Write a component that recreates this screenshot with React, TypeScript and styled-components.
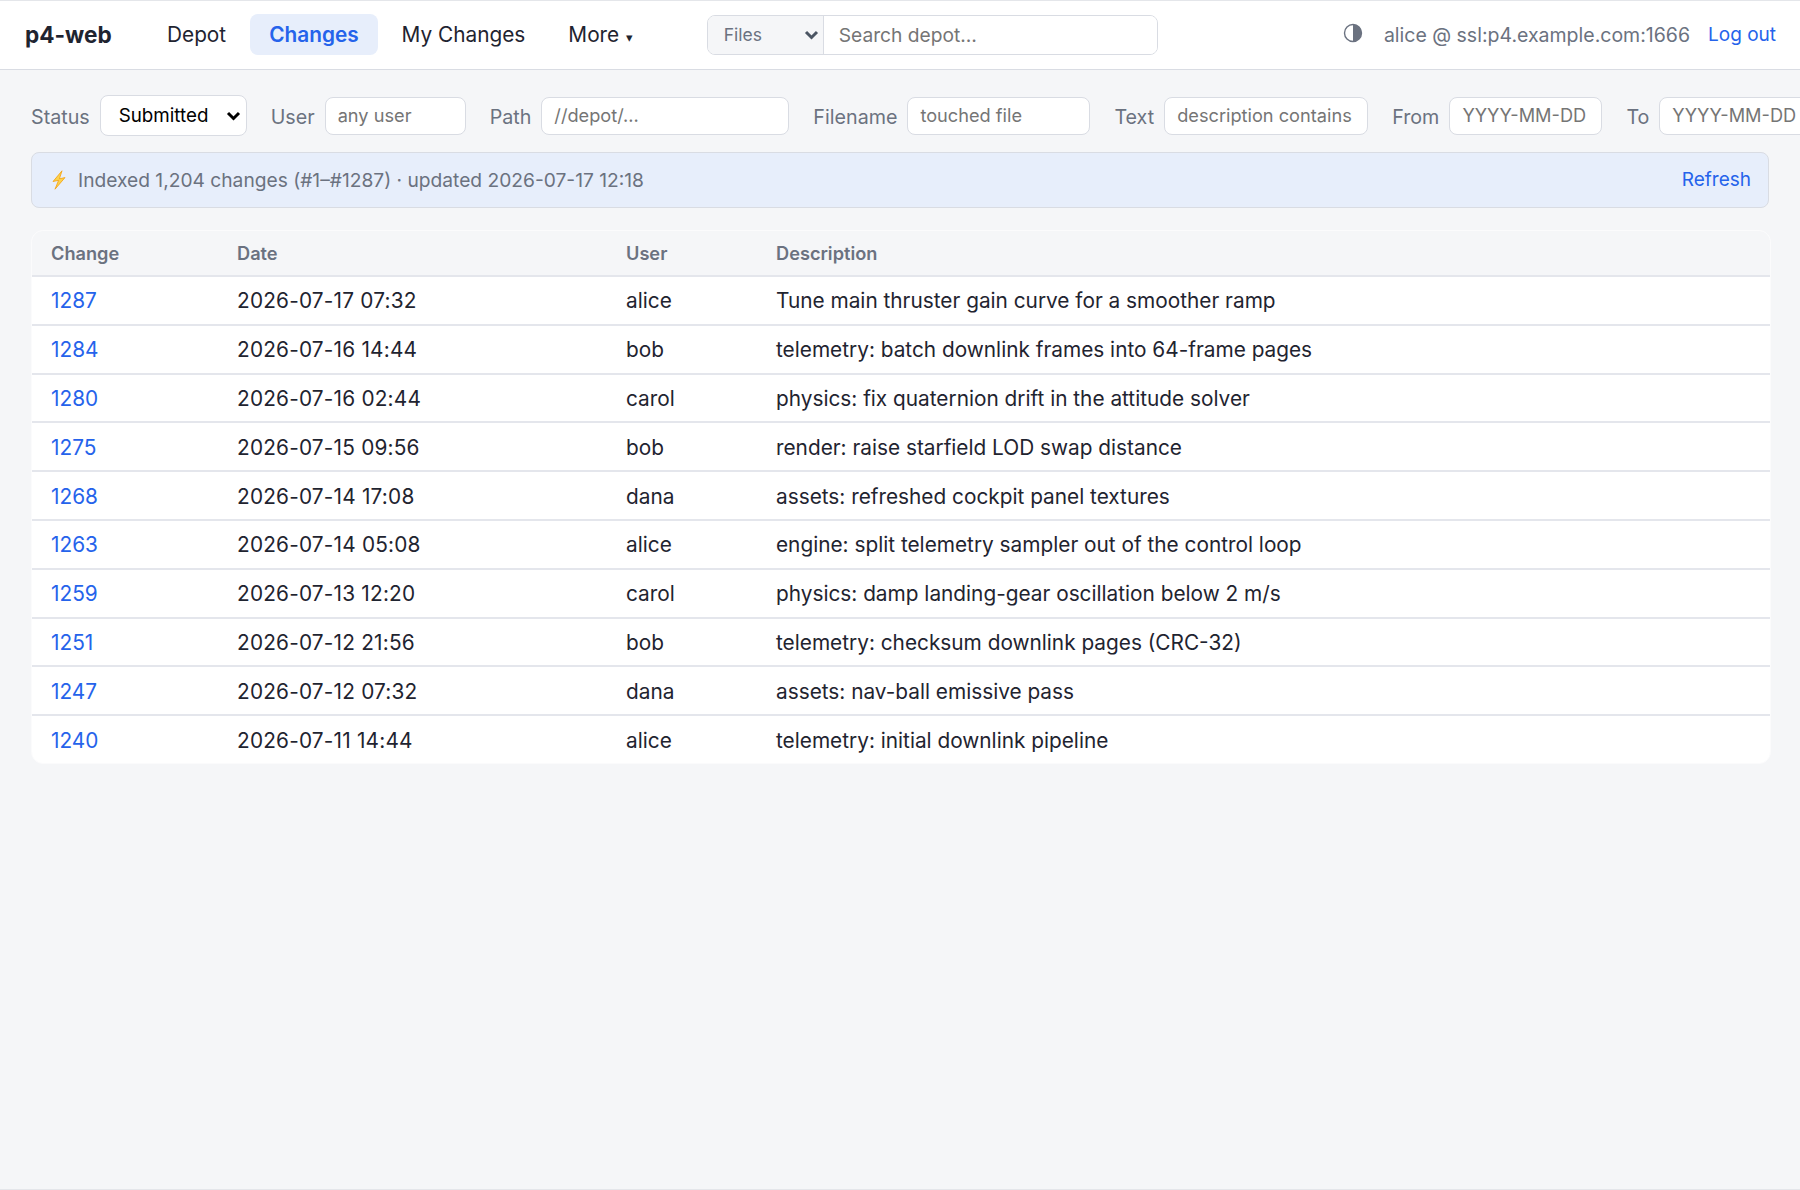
import React from 'react'
import styled, { createGlobalStyle } from 'styled-components'

const GlobalStyle = createGlobalStyle`
  html, body {
    margin: 0;
    height: 100%;
    overflow: hidden;
    background: #f5f6f8;
  }
  body {
    font-family: Inter, "Liberation Sans", sans-serif;
    color: #1f2430;
  }
  input::placeholder {
    color: #757575;
    opacity: 1;
  }
`

const Page = styled.div`
  width: 1800px;
  height: 1190px;
  overflow: hidden;
  border-top: 1px solid #e4e6ea;
  border-bottom: 1px solid #e4e6ea;
  box-sizing: border-box;
`

const TopBar = styled.header`
  display: flex;
  align-items: center;
  height: 69px;
  box-sizing: border-box;
  padding: 0 24px 1px 25px;
  background: #fff;
  border-bottom: 1px solid #d9dce3;
`

const Brand = styled.div`
  font-size: 22.6px;
  font-weight: 700;
  width: 123px;
  flex: none;
`

const Nav = styled.nav`
  display: flex;
  align-items: center;
  gap: 5px;
`

const NavItem = styled.a<{ $active?: boolean }>`
  display: block;
  padding: 8px 19px;
  height: 41px;
  box-sizing: border-box;
  line-height: 25px;
  border-radius: 8px;
  font-size: 20.8px;
  font-weight: ${p => (p.$active ? 600 : 400)};
  color: ${p => (p.$active ? '#2563eb' : '#1f2430')};
  background: ${p => (p.$active ? '#e7eefb' : 'transparent')};
`

const Caret = styled.span`
  font-size: 13px;
  margin-left: 7px;
`

const SearchGroup = styled.div`
  display: flex;
  height: 40px;
  width: 451px;
  margin-left: 54.5px;
  box-sizing: border-box;
  border: 1px solid #d9dce3;
  border-radius: 8px;
  overflow: hidden;
`

const SelectWrap = styled.div`
  position: relative;
  flex: none;
`

const Chevron = styled.svg<{ $right: number; $color: string }>`
  position: absolute;
  top: 50%;
  right: ${p => p.$right}px;
  width: 15px;
  height: 10px;
  margin-top: -5px;
  color: ${p => p.$color};
  pointer-events: none;
`

const ScopeSelect = styled.select`
  display: block;
  appearance: none;
  width: 116px;
  height: 38px;
  border: none;
  border-right: 1px solid #d9dce3;
  background: #f5f6f8;
  color: #6b7280;
  font: 400 17.5px Inter, sans-serif;
  padding: 0 16px;
  outline: none;
`

const SearchInput = styled.input`
  flex: 1;
  min-width: 0;
  border: none;
  padding: 0 15px;
  font: 400 19.2px Inter, sans-serif;
  outline: none;
`

const UserArea = styled.div`
  display: flex;
  align-items: center;
  margin-left: auto;
`

const ThemeToggle = styled.svg`
  width: 20px;
  height: 20px;
  margin-right: 21px;
  margin-top: -4px;
`

const UserInfo = styled.span`
  font-size: 19.5px;
  color: #6b7280;
  margin-right: 18px;
`

const BlueLink = styled.a`
  font-size: 19px;
  color: #2563eb;
`

const RefreshLink = styled(BlueLink)`
  margin-top: -2px;
`

const Main = styled.main`
  padding: 26px 31px 0;
`

const Filters = styled.div`
  display: flex;
  align-items: center;
  gap: 24px;
  width: 1900px;
  height: 39px;
`

const Field = styled.label`
  display: flex;
  align-items: center;
  gap: 10px;
  font-size: 19.7px;
  color: #6b7280;
`

const FieldLabel = styled.span`
  padding-top: 3px;
`

const StatusSelect = styled.select`
  display: block;
  appearance: none;
  width: 147px;
  height: 41px;
  background: #fff;
  border: 1px solid #d9dce3;
  border-radius: 8px;
  color: #000;
  font: 400 18.8px Inter, sans-serif;
  padding: 0 18px;
  outline: none;
`

const FilterInput = styled.input<{ $width: number }>`
  width: ${p => p.$width}px;
  height: 38px;
  box-sizing: border-box;
  background: #fff;
  border: 1px solid #d9dce3;
  border-radius: 8px;
  font: 400 18.2px Inter, sans-serif;
  padding: 0 12px 1px;
  outline: none;
`

const Banner = styled.div`
  display: flex;
  align-items: center;
  justify-content: space-between;
  box-sizing: border-box;
  height: 56px;
  width: 1738px;
  margin-top: 17px;
  padding: 0 17px 0 18px;
  background: #e7eefb;
  border: 1px solid #d9dce3;
  border-radius: 8px;
`

const BannerText = styled.div`
  display: flex;
  align-items: center;
  gap: 11px;
  font-size: 19.2px;
  color: #6b7280;
`

const Bolt = styled.svg`
  width: 16px;
  height: 20px;
  margin-left: 1px;
`

const TableCard = styled.div`
  width: 1738px;
  margin-top: 22px;
  border: 1px solid #fbfbfc;
  border-radius: 12px;
  background: #fff;
  overflow: hidden;
`

const Table = styled.table`
  width: 100%;
  border-collapse: collapse;
  table-layout: fixed;
`

const HeadCell = styled.th<{ $width?: number }>`
  box-sizing: border-box;
  width: ${p => (p.$width ? `${p.$width}px` : 'auto')};
  height: 45px;
  padding: 0 19px;
  background: #f5f6f8;
  border-bottom: 2px solid #e4e6ec;
  text-align: left;
  font-size: 18.2px;
  font-weight: 600;
  color: #6b7280;
`

const Row = styled.tr`
  &:not(:last-child) td {
    border-bottom: 2px solid #e4e6ec;
  }
`

const Cell = styled.td`
  height: 45.8px;
  padding: 1px 19px 0;
  font-size: 20.8px;
  color: #1f2430;

  ${BlueLink} {
    font-size: 20.8px;
  }
`

const DateCell = styled(Cell)`
  letter-spacing: 0.2px;
`

const rows = [
  ['1287', '2026-07-17 07:32', 'alice', 'Tune main thruster gain curve for a smoother ramp'],
  ['1284', '2026-07-16 14:44', 'bob', 'telemetry: batch downlink frames into 64-frame pages'],
  ['1280', '2026-07-16 02:44', 'carol', 'physics: fix quaternion drift in the attitude solver'],
  ['1275', '2026-07-15 09:56', 'bob', 'render: raise starfield LOD swap distance'],
  ['1268', '2026-07-14 17:08', 'dana', 'assets: refreshed cockpit panel textures'],
  ['1263', '2026-07-14 05:08', 'alice', 'engine: split telemetry sampler out of the control loop'],
  ['1259', '2026-07-13 12:20', 'carol', 'physics: damp landing-gear oscillation below 2 m/s'],
  ['1251', '2026-07-12 21:56', 'bob', 'telemetry: checksum downlink pages (CRC-32)'],
  ['1247', '2026-07-12 07:32', 'dana', 'assets: nav-ball emissive pass'],
  ['1240', '2026-07-11 14:44', 'alice', 'telemetry: initial downlink pipeline'],
]

function SelectChevron({ right, color }: { right: number; color: string }) {
  return (
    <Chevron $right={right} $color={color} viewBox="0 0 15 10">
      <path d="M2 2l5.5 5.5L13 2" fill="none" stroke="currentColor" strokeWidth="3" />
    </Chevron>
  )
}

export default function App() {
  return (
    <Page>
      <GlobalStyle />
      <TopBar>
        <Brand>p4-web</Brand>
        <Nav>
          <NavItem>Depot</NavItem>
          <NavItem $active>Changes</NavItem>
          <NavItem>My Changes</NavItem>
          <NavItem>
            More<Caret>▾</Caret>
          </NavItem>
        </Nav>
        <SearchGroup>
          <SelectWrap>
            <ScopeSelect defaultValue="Files">
              <option>Files</option>
            </ScopeSelect>
            <SelectChevron right={5} color="#4b5563" />
          </SelectWrap>
          <SearchInput placeholder="Search depot…" />
        </SearchGroup>
        <UserArea>
          <ThemeToggle viewBox="0 0 20 20">
            <circle cx="10" cy="10" r="8.5" fill="#fff" stroke="#6b7280" strokeWidth="1.4" />
            <path d="M10 1.5a8.5 8.5 0 0 1 0 17z" fill="#6b7280" />
          </ThemeToggle>
          <UserInfo>alice @ ssl:p4.example.com:1666</UserInfo>
          <BlueLink>Log out</BlueLink>
        </UserArea>
      </TopBar>
      <Main>
        <Filters>
          <Field>
            <FieldLabel>Status</FieldLabel>
            <SelectWrap>
              <StatusSelect defaultValue="Submitted">
                <option>Submitted</option>
              </StatusSelect>
              <SelectChevron right={6} color="#000" />
            </SelectWrap>
          </Field>
          <Field>
            <FieldLabel>User</FieldLabel>
            <FilterInput $width={141} placeholder="any user" />
          </Field>
          <Field>
            <FieldLabel>Path</FieldLabel>
            <FilterInput $width={248} placeholder="//depot/..." />
          </Field>
          <Field>
            <FieldLabel>Filename</FieldLabel>
            <FilterInput $width={183} placeholder="touched file" />
          </Field>
          <Field>
            <FieldLabel>Text</FieldLabel>
            <FilterInput $width={204} placeholder="description contains" />
          </Field>
          <Field>
            <FieldLabel>From</FieldLabel>
            <FilterInput $width={153} placeholder="YYYY-MM-DD" />
          </Field>
          <Field>
            <FieldLabel>To</FieldLabel>
            <FilterInput $width={153} placeholder="YYYY-MM-DD" />
          </Field>
        </Filters>
        <Banner>
          <BannerText>
            <Bolt viewBox="0 0 16 20">
              <path d="M11 .8 2 11.5l5.6-1.2L4 19.2l10-11.6-5.6 1.2z" fill="#fcd34d" stroke="#f59e0b" strokeWidth="0.8" strokeLinejoin="round" />
            </Bolt>
            Indexed 1,204 changes (#1–#1287) · updated 2026-07-17 12:18
          </BannerText>
          <RefreshLink>Refresh</RefreshLink>
        </Banner>
        <TableCard>
          <Table>
            <thead>
              <tr>
                <HeadCell $width={186}>Change</HeadCell>
                <HeadCell $width={389}>Date</HeadCell>
                <HeadCell $width={150}>User</HeadCell>
                <HeadCell>Description</HeadCell>
              </tr>
            </thead>
            <tbody>
              {rows.map(r => (
                <Row key={r[0]}>
                  <Cell><BlueLink>{r[0]}</BlueLink></Cell>
                  <DateCell>{r[1]}</DateCell>
                  <Cell>{r[2]}</Cell>
                  <Cell>{r[3]}</Cell>
                </Row>
              ))}
            </tbody>
          </Table>
        </TableCard>
      </Main>
    </Page>
  )
}
